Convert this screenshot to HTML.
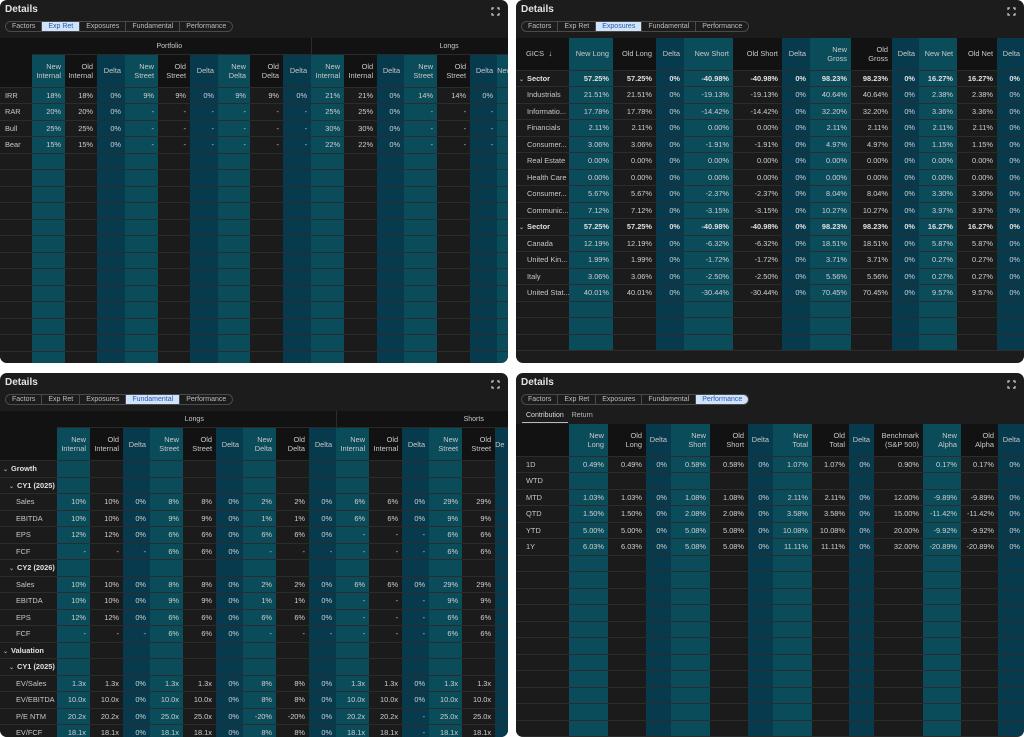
<!DOCTYPE html>
<html><head><meta charset="utf-8">
<style>
*{margin:0;padding:0;box-sizing:border-box}
body{width:1024px;height:737px;background:#fff;position:relative;overflow:hidden;font-family:"Liberation Sans",sans-serif;color:#cfcfcf}
.p{position:absolute;background:#1c1c1c;border-radius:7px;overflow:hidden;width:508px}
.ttl{position:absolute;left:5px;top:4px;font-size:10px;font-weight:bold;color:#e2e2e2}
.ex{position:absolute;right:8px;top:7px}
.tabs{position:absolute;left:5px;top:21px;height:11px;border:1px solid #4a4a4a;border-radius:6px;display:flex;overflow:hidden;font-size:7px;line-height:9px;color:#bdbdbd}
.tabs span{padding:0 6px;border-right:1px solid #4a4a4a}
.tabs span:last-child{border-right:0}
.tabs span.on{background:#cfe3fb;color:#2c58a6}
.sub{position:absolute;left:6px;top:38px;font-size:7px;color:#bbb}
.sub span{display:inline-block;padding:1px 4px 3px}
.sub span.on{border-bottom:1.5px solid #bbb;color:#ddd}
table{position:absolute;left:0;border-collapse:collapse;table-layout:fixed;font-size:7.4px}
td,th{height:16.5px;border-bottom:1px solid rgba(120,120,120,.18);text-align:right;padding-right:4px;white-space:nowrap;overflow:hidden;font-weight:normal}
th{line-height:9px;color:#c8c8c8}
td.l{text-align:left;padding-left:5px;color:#c8c8c8}
td.i{padding-left:16px}
tr.bold td{font-weight:bold;color:#e0e0e0}
col.a{background:#0b4c5b}
col.b{background:#1b1b1b}
col.c{background:#073a4d}
col.l{background:#1b1b1b}
th.k{background:#121212}
tr.g th{background:#121212;text-align:center;font-size:7px;border-bottom:1px solid #2a2a2a}
th.g2{border-left:1px solid #2e2e2e}
.cv{font-size:6px;color:#aaa;margin-right:3px}
</style></head><body>

<!-- Panel 1 -->
<div class="p" style="left:0;top:0;height:363px">
<div class="ttl">Details</div>
<svg class="ex" width="9" height="9" viewBox="0 0 9 9" fill="none" stroke="#ccc" stroke-width="1.2"><path d="M1 3V1h2M6 1h2v2M8 6v2H6M3 8H1V6"/></svg>
<div class="tabs"><span>Factors</span><span class="on">Exp Ret</span><span>Exposures</span><span>Fundamental</span><span>Performance</span></div>
<table style="top:38px;width:508px">
<colgroup><col class="l" style="width:32px"><col class="a" style="width:33px"><col class="b" style="width:32px"><col class="c" style="width:28px"><col class="a" style="width:33px"><col class="b" style="width:32px"><col class="c" style="width:28px"><col class="a" style="width:32px"><col class="b" style="width:33px"><col class="c" style="width:28px"><col class="a" style="width:33px"><col class="b" style="width:33px"><col class="c" style="width:27px"><col class="a" style="width:33px"><col class="b" style="width:33px"><col class="c" style="width:27px"><col class="a" style="width:11px"></colgroup>
<tr class="g"><th rowspan="2" class="k" style="height:49px"></th><th colspan="9">Portfolio</th><th colspan="7" class="g2" style="text-align:left;padding-left:128px">Longs</th></tr>
<tr style="height:32px"><th>New<br>Internal</th><th class="k">Old<br>Internal</th><th>Delta</th><th>New<br>Street</th><th class="k">Old<br>Street</th><th>Delta</th><th>New<br>Delta</th><th class="k">Old<br>Delta</th><th>Delta</th><th>New<br>Internal</th><th class="k">Old<br>Internal</th><th>Delta</th><th>New<br>Street</th><th class="k">Old<br>Street</th><th>Delta</th><th>New</th></tr>
<tr><td class="l">IRR</td><td>18%</td><td>18%</td><td>0%</td><td>9%</td><td>9%</td><td>0%</td><td>9%</td><td>9%</td><td>0%</td><td>21%</td><td>21%</td><td>0%</td><td>14%</td><td>14%</td><td>0%</td><td></td></tr>
<tr><td class="l">RAR</td><td>20%</td><td>20%</td><td>0%</td><td>-</td><td>-</td><td>-</td><td>-</td><td>-</td><td>-</td><td>25%</td><td>25%</td><td>0%</td><td>-</td><td>-</td><td>-</td><td></td></tr>
<tr><td class="l">Bull</td><td>25%</td><td>25%</td><td>0%</td><td>-</td><td>-</td><td>-</td><td>-</td><td>-</td><td>-</td><td>30%</td><td>30%</td><td>0%</td><td>-</td><td>-</td><td>-</td><td></td></tr>
<tr><td class="l">Bear</td><td>15%</td><td>15%</td><td>0%</td><td>-</td><td>-</td><td>-</td><td>-</td><td>-</td><td>-</td><td>22%</td><td>22%</td><td>0%</td><td>-</td><td>-</td><td>-</td><td></td></tr>
<tr><td></td><td></td><td></td><td></td><td></td><td></td><td></td><td></td><td></td><td></td><td></td><td></td><td></td><td></td><td></td><td></td><td></td></tr>
<tr><td></td><td></td><td></td><td></td><td></td><td></td><td></td><td></td><td></td><td></td><td></td><td></td><td></td><td></td><td></td><td></td><td></td></tr>
<tr><td></td><td></td><td></td><td></td><td></td><td></td><td></td><td></td><td></td><td></td><td></td><td></td><td></td><td></td><td></td><td></td><td></td></tr>
<tr><td></td><td></td><td></td><td></td><td></td><td></td><td></td><td></td><td></td><td></td><td></td><td></td><td></td><td></td><td></td><td></td><td></td></tr>
<tr><td></td><td></td><td></td><td></td><td></td><td></td><td></td><td></td><td></td><td></td><td></td><td></td><td></td><td></td><td></td><td></td><td></td></tr>
<tr><td></td><td></td><td></td><td></td><td></td><td></td><td></td><td></td><td></td><td></td><td></td><td></td><td></td><td></td><td></td><td></td><td></td></tr>
<tr><td></td><td></td><td></td><td></td><td></td><td></td><td></td><td></td><td></td><td></td><td></td><td></td><td></td><td></td><td></td><td></td><td></td></tr>
<tr><td></td><td></td><td></td><td></td><td></td><td></td><td></td><td></td><td></td><td></td><td></td><td></td><td></td><td></td><td></td><td></td><td></td></tr>
<tr><td></td><td></td><td></td><td></td><td></td><td></td><td></td><td></td><td></td><td></td><td></td><td></td><td></td><td></td><td></td><td></td><td></td></tr>
<tr><td></td><td></td><td></td><td></td><td></td><td></td><td></td><td></td><td></td><td></td><td></td><td></td><td></td><td></td><td></td><td></td><td></td></tr>
<tr><td></td><td></td><td></td><td></td><td></td><td></td><td></td><td></td><td></td><td></td><td></td><td></td><td></td><td></td><td></td><td></td><td></td></tr>
<tr><td></td><td></td><td></td><td></td><td></td><td></td><td></td><td></td><td></td><td></td><td></td><td></td><td></td><td></td><td></td><td></td><td></td></tr>
<tr><td></td><td></td><td></td><td></td><td></td><td></td><td></td><td></td><td></td><td></td><td></td><td></td><td></td><td></td><td></td><td></td><td></td></tr>
</table>
</div>

<!-- Panel 2 -->
<div class="p" style="left:516px;top:0;height:363px">
<div class="ttl">Details</div>
<svg class="ex" width="9" height="9" viewBox="0 0 9 9" fill="none" stroke="#ccc" stroke-width="1.2"><path d="M1 3V1h2M6 1h2v2M8 6v2H6M3 8H1V6"/></svg>
<div class="tabs"><span>Factors</span><span>Exp Ret</span><span class="on">Exposures</span><span>Fundamental</span><span>Performance</span></div>
<table style="top:38px;width:508px">
<colgroup><col class="l" style="width:53px"><col class="a" style="width:44px"><col class="b" style="width:43px"><col class="c" style="width:28px"><col class="a" style="width:49px"><col class="b" style="width:49px"><col class="c" style="width:28px"><col class="a" style="width:41px"><col class="b" style="width:41px"><col class="c" style="width:27px"><col class="a" style="width:38px"><col class="b" style="width:40px"><col class="c" style="width:27px"></colgroup>
<tr style="height:32px"><th class="k" style="text-align:left;padding-left:10px">GICS &nbsp;<b style="font-size:8px">↓</b></th><th>New Long</th><th class="k">Old Long</th><th>Delta</th><th>New Short</th><th class="k">Old Short</th><th>Delta</th><th>New<br>Gross</th><th class="k">Old<br>Gross</th><th>Delta</th><th>New Net</th><th class="k">Old Net</th><th>Delta</th></tr>
<tr class="bold"><td class="l" style="padding-left:3px"><span class="cv">⌄</span>Sector</td><td>57.25%</td><td>57.25%</td><td>0%</td><td>-40.98%</td><td>-40.98%</td><td>0%</td><td>98.23%</td><td>98.23%</td><td>0%</td><td>16.27%</td><td>16.27%</td><td>0%</td></tr>
<tr><td class="l" style="padding-left:11px">Industrials</td><td>21.51%</td><td>21.51%</td><td>0%</td><td>-19.13%</td><td>-19.13%</td><td>0%</td><td>40.64%</td><td>40.64%</td><td>0%</td><td>2.38%</td><td>2.38%</td><td>0%</td></tr>
<tr><td class="l" style="padding-left:11px">Informatio...</td><td>17.78%</td><td>17.78%</td><td>0%</td><td>-14.42%</td><td>-14.42%</td><td>0%</td><td>32.20%</td><td>32.20%</td><td>0%</td><td>3.36%</td><td>3.36%</td><td>0%</td></tr>
<tr><td class="l" style="padding-left:11px">Financials</td><td>2.11%</td><td>2.11%</td><td>0%</td><td>0.00%</td><td>0.00%</td><td>0%</td><td>2.11%</td><td>2.11%</td><td>0%</td><td>2.11%</td><td>2.11%</td><td>0%</td></tr>
<tr><td class="l" style="padding-left:11px">Consumer...</td><td>3.06%</td><td>3.06%</td><td>0%</td><td>-1.91%</td><td>-1.91%</td><td>0%</td><td>4.97%</td><td>4.97%</td><td>0%</td><td>1.15%</td><td>1.15%</td><td>0%</td></tr>
<tr><td class="l" style="padding-left:11px">Real Estate</td><td>0.00%</td><td>0.00%</td><td>0%</td><td>0.00%</td><td>0.00%</td><td>0%</td><td>0.00%</td><td>0.00%</td><td>0%</td><td>0.00%</td><td>0.00%</td><td>0%</td></tr>
<tr><td class="l" style="padding-left:11px">Health Care</td><td>0.00%</td><td>0.00%</td><td>0%</td><td>0.00%</td><td>0.00%</td><td>0%</td><td>0.00%</td><td>0.00%</td><td>0%</td><td>0.00%</td><td>0.00%</td><td>0%</td></tr>
<tr><td class="l" style="padding-left:11px">Consumer...</td><td>5.67%</td><td>5.67%</td><td>0%</td><td>-2.37%</td><td>-2.37%</td><td>0%</td><td>8.04%</td><td>8.04%</td><td>0%</td><td>3.30%</td><td>3.30%</td><td>0%</td></tr>
<tr><td class="l" style="padding-left:11px">Communic...</td><td>7.12%</td><td>7.12%</td><td>0%</td><td>-3.15%</td><td>-3.15%</td><td>0%</td><td>10.27%</td><td>10.27%</td><td>0%</td><td>3.97%</td><td>3.97%</td><td>0%</td></tr>
<tr class="bold"><td class="l" style="padding-left:3px"><span class="cv">⌄</span>Sector</td><td>57.25%</td><td>57.25%</td><td>0%</td><td>-40.98%</td><td>-40.98%</td><td>0%</td><td>98.23%</td><td>98.23%</td><td>0%</td><td>16.27%</td><td>16.27%</td><td>0%</td></tr>
<tr><td class="l" style="padding-left:11px">Canada</td><td>12.19%</td><td>12.19%</td><td>0%</td><td>-6.32%</td><td>-6.32%</td><td>0%</td><td>18.51%</td><td>18.51%</td><td>0%</td><td>5.87%</td><td>5.87%</td><td>0%</td></tr>
<tr><td class="l" style="padding-left:11px">United Kin...</td><td>1.99%</td><td>1.99%</td><td>0%</td><td>-1.72%</td><td>-1.72%</td><td>0%</td><td>3.71%</td><td>3.71%</td><td>0%</td><td>0.27%</td><td>0.27%</td><td>0%</td></tr>
<tr><td class="l" style="padding-left:11px">Italy</td><td>3.06%</td><td>3.06%</td><td>0%</td><td>-2.50%</td><td>-2.50%</td><td>0%</td><td>5.56%</td><td>5.56%</td><td>0%</td><td>0.27%</td><td>0.27%</td><td>0%</td></tr>
<tr><td class="l" style="padding-left:11px">United Stat...</td><td>40.01%</td><td>40.01%</td><td>0%</td><td>-30.44%</td><td>-30.44%</td><td>0%</td><td>70.45%</td><td>70.45%</td><td>0%</td><td>9.57%</td><td>9.57%</td><td>0%</td></tr>
<tr><td></td><td></td><td></td><td></td><td></td><td></td><td></td><td></td><td></td><td></td><td></td><td></td><td></td></tr>
<tr><td></td><td></td><td></td><td></td><td></td><td></td><td></td><td></td><td></td><td></td><td></td><td></td><td></td></tr>
<tr><td></td><td></td><td></td><td></td><td></td><td></td><td></td><td></td><td></td><td></td><td></td><td></td><td></td></tr>
</table>
</div>

<!-- Panel 3 -->
<div class="p" style="left:0;top:373px;height:364px">
<div class="ttl">Details</div>
<svg class="ex" width="9" height="9" viewBox="0 0 9 9" fill="none" stroke="#ccc" stroke-width="1.2"><path d="M1 3V1h2M6 1h2v2M8 6v2H6M3 8H1V6"/></svg>
<div class="tabs"><span>Factors</span><span>Exp Ret</span><span>Exposures</span><span class="on">Fundamental</span><span>Performance</span></div>
<table style="top:38px;width:508px">
<colgroup><col class="l" style="width:57px"><col class="a" style="width:33px"><col class="b" style="width:33px"><col class="c" style="width:27px"><col class="a" style="width:33px"><col class="b" style="width:33px"><col class="c" style="width:27px"><col class="a" style="width:33px"><col class="b" style="width:33px"><col class="c" style="width:27px"><col class="a" style="width:33px"><col class="b" style="width:33px"><col class="c" style="width:27px"><col class="a" style="width:33px"><col class="b" style="width:33px"><col class="c" style="width:13px"></colgroup>
<tr class="g"><th rowspan="2" class="k" style="height:49px"></th><th colspan="9">Longs</th><th colspan="6" class="g2" style="text-align:left;padding-left:127px">Shorts</th></tr>
<tr style="height:33px"><th>New<br>Internal</th><th class="k">Old<br>Internal</th><th>Delta</th><th>New<br>Street</th><th class="k">Old<br>Street</th><th>Delta</th><th>New<br>Delta</th><th class="k">Old<br>Delta</th><th>Delta</th><th>New<br>Internal</th><th class="k">Old<br>Internal</th><th>Delta</th><th>New<br>Street</th><th class="k">Old<br>Street</th><th>De</th></tr>
<tr class="bold"><td class="l" style="padding-left:3px"><span class="cv">⌄</span>Growth</td><td></td><td></td><td></td><td></td><td></td><td></td><td></td><td></td><td></td><td></td><td></td><td></td><td></td><td></td><td></td></tr>
<tr class="bold"><td class="l" style="padding-left:9px"><span class="cv">⌄</span>CY1 (2025)</td><td></td><td></td><td></td><td></td><td></td><td></td><td></td><td></td><td></td><td></td><td></td><td></td><td></td><td></td><td></td></tr>
<tr><td class="l i">Sales</td><td>10%</td><td>10%</td><td>0%</td><td>8%</td><td>8%</td><td>0%</td><td>2%</td><td>2%</td><td>0%</td><td>6%</td><td>6%</td><td>0%</td><td>29%</td><td>29%</td><td></td></tr>
<tr><td class="l i">EBITDA</td><td>10%</td><td>10%</td><td>0%</td><td>9%</td><td>9%</td><td>0%</td><td>1%</td><td>1%</td><td>0%</td><td>6%</td><td>6%</td><td>0%</td><td>9%</td><td>9%</td><td></td></tr>
<tr><td class="l i">EPS</td><td>12%</td><td>12%</td><td>0%</td><td>6%</td><td>6%</td><td>0%</td><td>6%</td><td>6%</td><td>0%</td><td>-</td><td>-</td><td>-</td><td>6%</td><td>6%</td><td></td></tr>
<tr><td class="l i">FCF</td><td>-</td><td>-</td><td>-</td><td>6%</td><td>6%</td><td>0%</td><td>-</td><td>-</td><td>-</td><td>-</td><td>-</td><td>-</td><td>6%</td><td>6%</td><td></td></tr>
<tr class="bold"><td class="l" style="padding-left:9px"><span class="cv">⌄</span>CY2 (2026)</td><td></td><td></td><td></td><td></td><td></td><td></td><td></td><td></td><td></td><td></td><td></td><td></td><td></td><td></td><td></td></tr>
<tr><td class="l i">Sales</td><td>10%</td><td>10%</td><td>0%</td><td>8%</td><td>8%</td><td>0%</td><td>2%</td><td>2%</td><td>0%</td><td>6%</td><td>6%</td><td>0%</td><td>29%</td><td>29%</td><td></td></tr>
<tr><td class="l i">EBITDA</td><td>10%</td><td>10%</td><td>0%</td><td>9%</td><td>9%</td><td>0%</td><td>1%</td><td>1%</td><td>0%</td><td>-</td><td>-</td><td>-</td><td>9%</td><td>9%</td><td></td></tr>
<tr><td class="l i">EPS</td><td>12%</td><td>12%</td><td>0%</td><td>6%</td><td>6%</td><td>0%</td><td>6%</td><td>6%</td><td>0%</td><td>-</td><td>-</td><td>-</td><td>6%</td><td>6%</td><td></td></tr>
<tr><td class="l i">FCF</td><td>-</td><td>-</td><td>-</td><td>6%</td><td>6%</td><td>0%</td><td>-</td><td>-</td><td>-</td><td>-</td><td>-</td><td>-</td><td>6%</td><td>6%</td><td></td></tr>
<tr class="bold"><td class="l" style="padding-left:3px"><span class="cv">⌄</span>Valuation</td><td></td><td></td><td></td><td></td><td></td><td></td><td></td><td></td><td></td><td></td><td></td><td></td><td></td><td></td><td></td></tr>
<tr class="bold"><td class="l" style="padding-left:9px"><span class="cv">⌄</span>CY1 (2025)</td><td></td><td></td><td></td><td></td><td></td><td></td><td></td><td></td><td></td><td></td><td></td><td></td><td></td><td></td><td></td></tr>
<tr><td class="l i">EV/Sales</td><td>1.3x</td><td>1.3x</td><td>0%</td><td>1.3x</td><td>1.3x</td><td>0%</td><td>8%</td><td>8%</td><td>0%</td><td>1.3x</td><td>1.3x</td><td>0%</td><td>1.3x</td><td>1.3x</td><td></td></tr>
<tr><td class="l i">EV/EBITDA</td><td>10.0x</td><td>10.0x</td><td>0%</td><td>10.0x</td><td>10.0x</td><td>0%</td><td>8%</td><td>8%</td><td>0%</td><td>10.0x</td><td>10.0x</td><td>0%</td><td>10.0x</td><td>10.0x</td><td></td></tr>
<tr><td class="l i">P/E NTM</td><td>20.2x</td><td>20.2x</td><td>0%</td><td>25.0x</td><td>25.0x</td><td>0%</td><td>-20%</td><td>-20%</td><td>0%</td><td>20.2x</td><td>20.2x</td><td>-</td><td>25.0x</td><td>25.0x</td><td></td></tr>
<tr><td class="l i">EV/FCF</td><td>18.1x</td><td>18.1x</td><td>0%</td><td>18.1x</td><td>18.1x</td><td>0%</td><td>8%</td><td>8%</td><td>0%</td><td>18.1x</td><td>18.1x</td><td>-</td><td>18.1x</td><td>18.1x</td><td></td></tr>
</table>
</div>

<!-- Panel 4 -->
<div class="p" style="left:516px;top:373px;height:364px">
<div class="ttl">Details</div>
<svg class="ex" width="9" height="9" viewBox="0 0 9 9" fill="none" stroke="#ccc" stroke-width="1.2"><path d="M1 3V1h2M6 1h2v2M8 6v2H6M3 8H1V6"/></svg>
<div class="tabs"><span>Factors</span><span>Exp Ret</span><span>Exposures</span><span>Fundamental</span><span class="on">Performance</span></div>
<div class="sub"><span class="on">Contribution</span><span>Return</span></div>
<table style="top:51px;width:508px">
<colgroup><col class="l" style="width:53px"><col class="a" style="width:39px"><col class="b" style="width:38px"><col class="c" style="width:25px"><col class="a" style="width:39px"><col class="b" style="width:38px"><col class="c" style="width:25px"><col class="a" style="width:39px"><col class="b" style="width:37px"><col class="c" style="width:25px"><col class="b" style="width:49px"><col class="a" style="width:38px"><col class="b" style="width:37px"><col class="c" style="width:26px"></colgroup>
<tr style="height:32px"><th class="k"></th><th>New<br>Long</th><th class="k">Old<br>Long</th><th>Delta</th><th>New<br>Short</th><th class="k">Old<br>Short</th><th>Delta</th><th>New<br>Total</th><th class="k">Old<br>Total</th><th>Delta</th><th class="k">Benchmark<br>(S&amp;P 500)</th><th>New<br>Alpha</th><th class="k">Old<br>Alpha</th><th>Delta</th></tr>
<tr><td class="l" style="padding-left:10px">1D</td><td>0.49%</td><td>0.49%</td><td>0%</td><td>0.58%</td><td>0.58%</td><td>0%</td><td>1.07%</td><td>1.07%</td><td>0%</td><td>0.90%</td><td>0.17%</td><td>0.17%</td><td>0%</td></tr>
<tr><td class="l" style="padding-left:10px">WTD</td><td></td><td></td><td></td><td></td><td></td><td></td><td></td><td></td><td></td><td></td><td></td><td></td><td></td></tr>
<tr><td class="l" style="padding-left:10px">MTD</td><td>1.03%</td><td>1.03%</td><td>0%</td><td>1.08%</td><td>1.08%</td><td>0%</td><td>2.11%</td><td>2.11%</td><td>0%</td><td>12.00%</td><td>-9.89%</td><td>-9.89%</td><td>0%</td></tr>
<tr><td class="l" style="padding-left:10px">QTD</td><td>1.50%</td><td>1.50%</td><td>0%</td><td>2.08%</td><td>2.08%</td><td>0%</td><td>3.58%</td><td>3.58%</td><td>0%</td><td>15.00%</td><td>-11.42%</td><td>-11.42%</td><td>0%</td></tr>
<tr><td class="l" style="padding-left:10px">YTD</td><td>5.00%</td><td>5.00%</td><td>0%</td><td>5.08%</td><td>5.08%</td><td>0%</td><td>10.08%</td><td>10.08%</td><td>0%</td><td>20.00%</td><td>-9.92%</td><td>-9.92%</td><td>0%</td></tr>
<tr><td class="l" style="padding-left:10px">1Y</td><td>6.03%</td><td>6.03%</td><td>0%</td><td>5.08%</td><td>5.08%</td><td>0%</td><td>11.11%</td><td>11.11%</td><td>0%</td><td>32.00%</td><td>-20.89%</td><td>-20.89%</td><td>0%</td></tr>
<tr><td></td><td></td><td></td><td></td><td></td><td></td><td></td><td></td><td></td><td></td><td></td><td></td><td></td><td></td></tr>
<tr><td></td><td></td><td></td><td></td><td></td><td></td><td></td><td></td><td></td><td></td><td></td><td></td><td></td><td></td></tr>
<tr><td></td><td></td><td></td><td></td><td></td><td></td><td></td><td></td><td></td><td></td><td></td><td></td><td></td><td></td></tr>
<tr><td></td><td></td><td></td><td></td><td></td><td></td><td></td><td></td><td></td><td></td><td></td><td></td><td></td><td></td></tr>
<tr><td></td><td></td><td></td><td></td><td></td><td></td><td></td><td></td><td></td><td></td><td></td><td></td><td></td><td></td></tr>
<tr><td></td><td></td><td></td><td></td><td></td><td></td><td></td><td></td><td></td><td></td><td></td><td></td><td></td><td></td></tr>
<tr><td></td><td></td><td></td><td></td><td></td><td></td><td></td><td></td><td></td><td></td><td></td><td></td><td></td><td></td></tr>
<tr><td></td><td></td><td></td><td></td><td></td><td></td><td></td><td></td><td></td><td></td><td></td><td></td><td></td><td></td></tr>
<tr><td></td><td></td><td></td><td></td><td></td><td></td><td></td><td></td><td></td><td></td><td></td><td></td><td></td><td></td></tr>
<tr><td></td><td></td><td></td><td></td><td></td><td></td><td></td><td></td><td></td><td></td><td></td><td></td><td></td><td></td></tr>
<tr><td></td><td></td><td></td><td></td><td></td><td></td><td></td><td></td><td></td><td></td><td></td><td></td><td></td><td></td></tr>
<tr><td></td><td></td><td></td><td></td><td></td><td></td><td></td><td></td><td></td><td></td><td></td><td></td><td></td><td></td></tr>
</table>
</div>
</body></html>
